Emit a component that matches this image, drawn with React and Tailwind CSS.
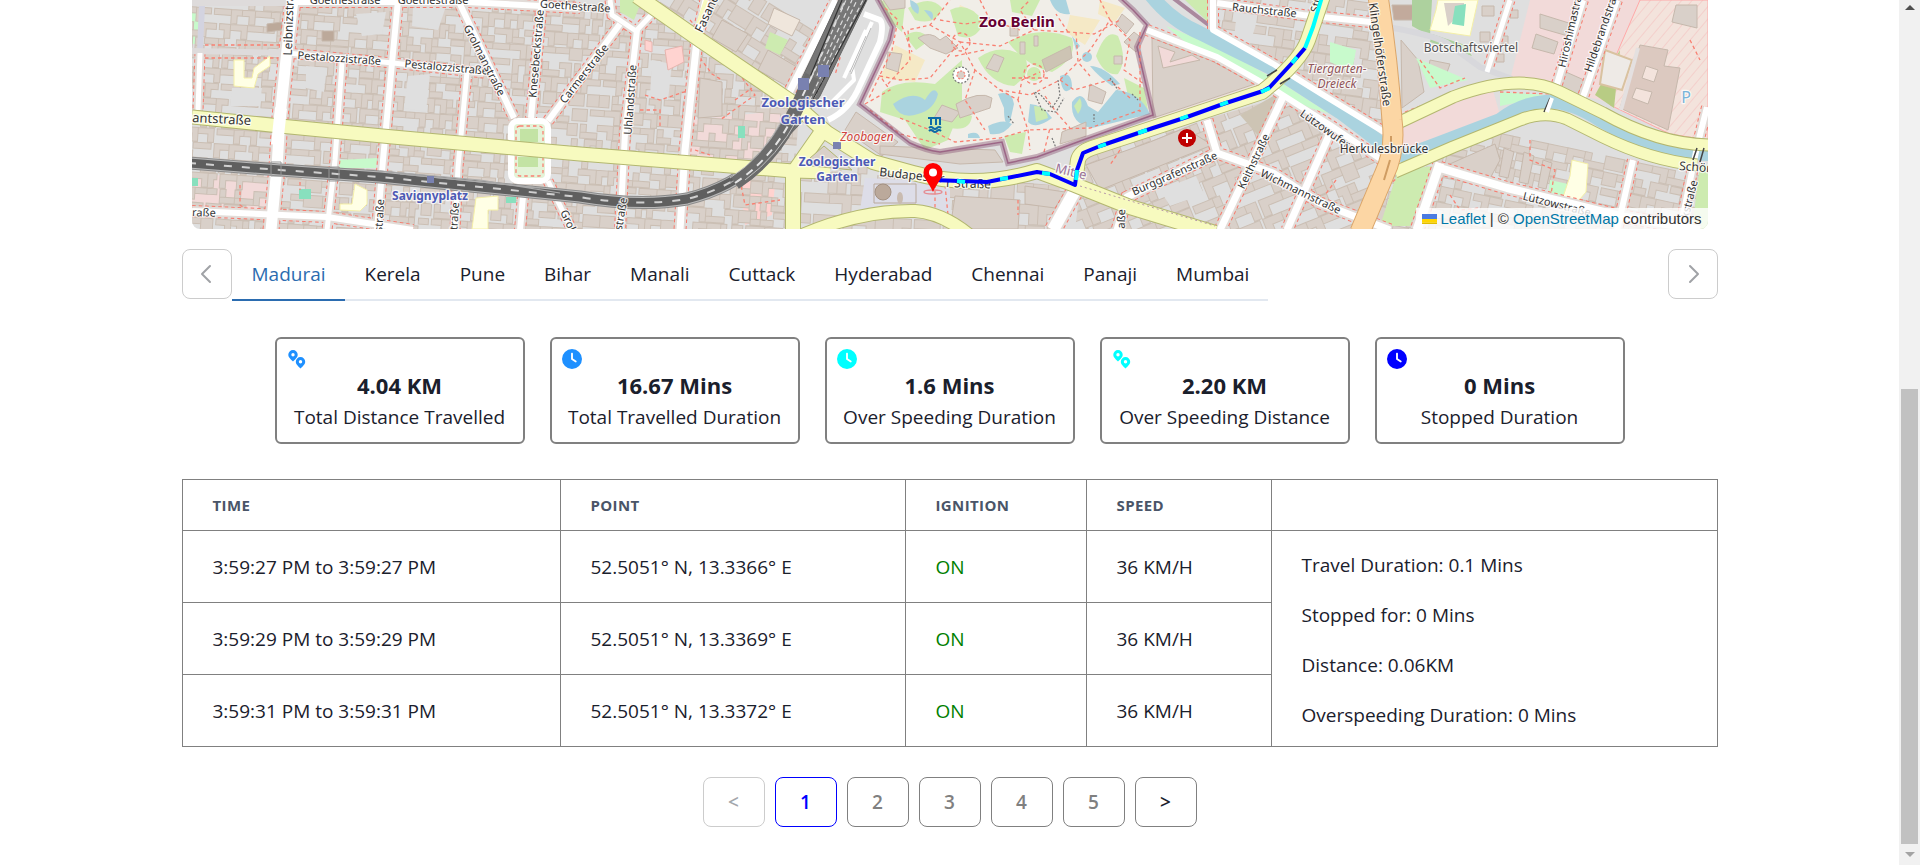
import React, { useState } from "react";
import { FaClock } from "react-icons/fa6";

/* ---------- map drawing ---------- */

function makeRandom(seed) {
  let s = seed;
  return () => {
    s = (s * 16807) % 2147483647;
    return s / 2147483647;
  };
}

// Outlines of houses for one district, laid on a regular grid.
function housePath(width, height, cell, seed) {
  const rnd = makeRandom(seed);
  let d = "";
  for (let y = 0; y < height; y += cell) {
    let x = 0;
    while (x < width) {
      const w = Math.round(cell * (0.6 + rnd() * 0.7));
      const h = cell - 1;
      const t = Math.round(cell * 0.42);
      const k = rnd();
      if (k < 0.28) d += `M${x} ${y}h${w}v${t}h${-(w - t)}v${h - t}h${-t}z`;
      else if (k < 0.5) d += `M${x} ${y}h${w}v${h}h${-t}v${-(h - t)}h${-(w - t)}z`;
      else if (k < 0.62) d += `M${x} ${y}h${w}v${h - 2}h${-w}z`;
      else if (k < 0.8) d += `M${x} ${y + h - t}h${w}v${t}h${-w}zM${x} ${y}h${t}v${h - t}h${-t}z`;
      else d += `M${x} ${y}h${w}v${t}h${-w}z`;
      x += w + (rnd() < 0.25 ? 3 : 0);
    }
  }
  return d;
}

const districts = [
  { id: "west", clip: "192,0 640,0 800,100 790,230 192,230", x: 170, y: -40, w: 680, h: 330, angle: 4, cell: 15, seed: 11 },
  { id: "north", clip: "645,0 832,0 790,95", x: 620, y: -90, w: 260, h: 240, angle: 32, cell: 19, seed: 23 },
  { id: "south", clip: "800,176 870,166 1060,186 1055,230 800,230", x: 790, y: 150, w: 290, h: 120, angle: 3, cell: 21, seed: 37 },
  { id: "mid", clip: "1085,155 1285,96 1390,165 1370,230 1075,230 1080,190", x: 1030, y: 170, w: 380, h: 230, angle: -22, cell: 19, seed: 51 },
  { id: "diplomat", clip: "1216,0 1380,0 1390,130 1215,28", x: 1200, y: -40, w: 230, h: 200, angle: 8, cell: 19, seed: 67 },
  { id: "east", clip: "1400,165 1550,118 1708,170 1708,230 1360,230", x: 1390, y: 110, w: 380, h: 150, angle: 12, cell: 16, seed: 79 },
];

const whiteRoads = [
  ["M293 0L287 50L280 117L277 167L271 230", 11],
  ["M200 53L198 110", 5],
  ["M293 2H467L580 8", 6],
  ["M287 53L393 63L484 73", 5],
  ["M398 0L392 63L383 160L377 230", 6],
  ["M342 63L335 160L327 230", 5],
  ["M467 72L458 167L455 230", 5],
  ["M458 0L514 118", 6],
  ["M542 0L531 118", 6],
  ["M548 121L620 24", 6],
  ["M192 211L327 217L413 230", 6],
  ["M523 196L520 230", 6],
  ["M548 181L572 230", 5],
  ["M610 0L612 15L636 31L656 10", 5],
  ["M637 30L625 133L620 230", 6],
  ["M706 0L697 40L685 150L680 230", 7],
  ["M836 0L787 97", 7],
  ["M1147 30L1217 57L1270 87L1330 125L1382 160", 6],
  ["M1213 0V30L1275 65L1320 93L1384 132", 6],
  ["M1217 3L1303 15L1380 23", 6],
  ["M1283 97L1220 230", 7],
  ["M1207 120L1217 153L1273 173L1320 203L1390 230", 7],
  ["M1217 153L1127 197L1117 230", 7],
  ["M1330 133L1287 230", 7],
  ["M1510 0L1487 72", 5],
  ["M1583 0L1557 84", 6],
  ["M1617 0L1583 97", 6],
  ["M1440 168L1507 188L1620 216L1700 230", 8],
  ["M1440 163L1417 230", 9],
  ["M1633 160L1617 230", 6],
  ["M1707 107L1697 147L1680 230", 6],
  ["M1077 187L1053 230", 12],
];

const yellowRoads = [
  ["M192 117L280 126L393 137L580 154L793 171L830 172", 13],
  ["M637 -4L700 40L793 103L827 133L873 162L913 173Q975 190 1037 171L1075 185L1130 207L1215 233", 14],
  ["M793 232V173L823 130", 14],
  ["M800 236Q860 210 915 211Q945 213 975 240", 12],
  ["M1075 183L1078 160Q1080 152 1092 148L1147 130L1262 92Q1300 62 1308 40L1323 -4", 14],
  ["M1400 122L1453 97Q1520 72 1560 92L1603 113Q1660 145 1712 145", 11],
  ["M1395 172L1453 147L1520 120Q1545 110 1567 119L1603 137Q1650 160 1697 165", 11],
];

const rail = "M188 163L280 170L380 177L580 197Q640 207 687 199Q735 187 765 156Q790 126 808 84L847 -4";
const route = "M933 180L960 181L987 182L1007 178L1037 172L1050 174L1075 185L1077 170L1083 153L1100 146L1153 128L1187 117L1223 104L1263 91L1270 87L1293 62L1305 48";
const routeFast = "M957 181L965 182M1000 179L1008 178M1042 173L1050 174M1076 180L1077 170M1098 147L1106 144M1138 133L1147 130M1180 119L1188 116M1220 105L1228 102M1261 92L1270 88M1292 63L1297 57M1305 48L1313 27L1322 -3";
const zooEdge = "M877 -2L893 27L890 40L860 104L910 143Q925 150 940 152L1002 142L1008 163L1037 157L1083 140L1153 115L1137 47L1147 25L1133 10L1120 -2";

function MapLabel({ x, y, angle = 0, size = 11, fill = "#333", bold, italic, anchor = "middle", children }) {
  return (
    <text
      x={x}
      y={y}
      transform={`rotate(${angle} ${x} ${y})`}
      fontSize={size}
      fill={fill}
      textAnchor={anchor}
      fontWeight={bold ? 700 : 400}
      fontStyle={italic ? "italic" : "normal"}
      stroke="#fff"
      strokeOpacity="0.75"
      strokeWidth="2.5"
      strokeLinejoin="round"
      paintOrder="stroke"
    >
      {children}
    </text>
  );
}

function CityMap() {
  return (
    <svg
      viewBox="192 0 1516 229"
      preserveAspectRatio="xMidYMax slice"
      className="block h-[229px] w-full font-['Noto_Sans',sans-serif]"
      role="img"
      aria-label="Map of the travelled route"
    >
      <defs>
        {districts.map((d) => (
          <clipPath key={d.id} id={`clip-${d.id}`}>
            <polygon points={d.clip} />
          </clipPath>
        ))}
        <clipPath id="clip-zoo">
          <path d={`${zooEdge}Z`} />
        </clipPath>
        <pattern id="hatch" width="8" height="8" patternUnits="userSpaceOnUse" patternTransform="rotate(40)">
          <rect width="8" height="8" fill="#f3e3dc" />
          <path d="M0 0V8" stroke="#f3cfcb" strokeWidth="2" />
        </pattern>
      </defs>

      <rect x="180" y="-10" width="1540" height="250" fill="#dfdfdf" />

      {/* land use */}
      <path d="M192 8H198L200 44H192Z" fill="#c8facc" />
      <path d="M192 175L268 176L265 210H192Z" fill="#f2dad9" />
      <path d="M690 120L790 110L770 165L690 160Z" fill="#f2dad9" />
      <path d="M740 178L775 185L772 215L745 225Z" fill="#ffd3d0" />
      <path d="M1140 30L1212 62L1275 90L1150 128Z" fill="#eadfdb" />
      <path d="M1530 0H1708V140L1600 100L1510 80Z" fill="#f2dad9" />
      <path d="M1380 120L1490 80L1500 115L1400 150Z" fill="#f2dad9" />
      <path d="M1614 60L1640 0H1708V140L1670 134L1610 105Z" fill="url(#hatch)" stroke="#ffa8a8" />

      {/* houses */}
      {districts.map((d) => (
        <g key={d.id} clipPath={`url(#clip-${d.id})`}>
          <path
            transform={`translate(${d.x} ${d.y}) rotate(${d.angle})`}
            d={housePath(d.w, d.h, d.cell, d.seed)}
            fill="#d9d0c9"
            stroke="#cbbfb4"
            strokeWidth="1"
          />
        </g>
      ))}
      <g fill="#d9d0c9" stroke="#c6b8ac">
        <path d="M700 78L722 82L722 116L698 118Z" />
        <path d="M722 20L748 34L736 52L712 38Z" />
        <path d="M768 50L802 70L790 88L758 70Z" />
        <path d="M774 8L800 20L792 36L768 24Z" fill="#efe6dc" />
        <path d="M856 112L898 142L882 156L845 130Z" />
        <path d="M880 146L995 150L1003 162L960 164L880 154Z" />
        <path d="M955 196L1020 200L1018 229H950Z" />
        <path d="M1025 186L1065 192L1055 208L1025 204Z" />
        <path d="M1152 38L1210 60L1255 84L1153 118Z" />
        <path d="M1158 46L1175 52L1170 62L1192 55L1200 60L1163 68Z" fill="#f2dad9" />
        <path d="M1086 165L1150 142L1185 128L1212 145L1100 190Z" />
        <path d="M1275 95L1280 100L1262 140L1240 115Z" fill="#cdc4b4" stroke="none" />
        <path d="M1443 167L1495 144L1500 160L1487 184Z" />
        <path d="M1401 40L1418 60L1424 92L1402 108Z" />
        <path d="M1430 60L1450 64L1445 78L1428 72Z" />
        <path d="M1540 14L1572 24L1568 36L1540 28Z" />
        <path d="M1536 34L1558 42L1554 54L1532 48Z" />
        <path d="M1566 72L1584 80L1576 98L1558 90Z" />
        <path d="M1676 5L1697 5V28L1672 22Z" />
        <path d="M1640 45L1668 50L1664 66L1680 68L1668 130L1620 108Z" fill="#dcc9c0" />
        <path d="M1646 66L1658 70L1654 82L1642 78ZM1636 88L1652 92L1648 104L1632 98Z" fill="#f3e3dc" />
        <path d="M1482 6H1494V16H1482ZM1480 32H1490V42H1480ZM1510 10H1518V18H1510ZM1500 36H1508V44H1500ZM1496 54H1504V62H1496Z" />
        <path d="M1392 5H1414L1412 20H1394Z" fill="#c2aa9c" />
        <path d="M267 24L282 22V30L267 32ZM322 31H334V41H322Z" fill="#bca99a" />
        <path d="M1504 148l10 4l-6 26l-9 -2zM1524 152l10 4l-6 28l-9 -2zM1543 160l9 3l-6 26l-8 -2z" />
      </g>

      {/* courtyards and open blocks */}
      <g fill="#dfdfdf">
        <path d="M232 88H262L260 106H230ZM356 14L386 12L382 34L362 36ZM413 8L446 6L438 30L412 26Z" />
        <path d="M306 66L326 68L324 92L306 88ZM408 76L430 74L426 112L404 108ZM652 60L672 64L668 100L650 96Z" />
        <path d="M1160 190L1196 176L1204 194L1170 206ZM1236 20L1256 24L1250 44L1234 38Z" />
      </g>

      {/* parks, schools and pitches */}
      <g fill="#cdebb0">
        <path d="M620 0H642L634 20L620 12Z" />
        <path d="M770 32L788 40L780 55L765 48Z" />
        <path d="M1398 170L1434 166L1420 200L1410 226H1380Z" />
        <path d="M1185 0H1210L1208 22Z" />
        <path d="M1595 95L1620 50L1614 108Z" fill="#b8cc84" />
        <path d="M1700 165H1708V229H1692Z" />
        <path d="M1412 0H1432L1430 36L1412 26Z" fill="#add19e" />
        <path d="M1432 34L1465 45L1472 56L1430 42Z" fill="#add19e" />
      </g>
      <g fill="#c8facc">
        <path d="M1330 42L1356 50L1352 72L1330 62Z" />
        <path d="M1416 58L1468 80L1430 88Z" />
        <path d="M1500 92L1560 96L1520 102L1500 106Z" />
        <path d="M338 160L377 158L376 168L340 168Z" />
        <path d="M1550 180L1568 184L1564 204L1548 196Z" />
      </g>
      <g fill="#ffffe5" stroke="#f5f0a8">
        <path d="M234 60H244V78H252L254 68L270 56V66L258 74L254 88L234 86Z" />
        <path d="M355 184L367 190V204L360 211L340 210V204H352Z" />
        <path d="M476 198L498 196V210H488V229H472Z" />
        <path d="M1438 0H1478L1470 36L1430 30L1436 10Z" />
        <path d="M1572 160L1588 164L1586 192L1574 206L1562 200L1570 176Z" />
      </g>
      <path d="M1444 3H1464V10L1448 26Z" fill="#d9d0c9" />
      <path d="M1455 6L1466 4L1464 26L1452 24Z" fill="#88e0be" />
      <path d="M1605 50L1632 60L1622 90L1600 84Z" fill="#eeeae6" stroke="#d9c2a0" strokeWidth="2" />
      <path d="M299 189H311V199H299ZM192 178H198V186H192ZM506 197H516V203H506ZM738 126H745V138H738Z" fill="#88e0be" />
      <path d="M665 50L682 46L684 62L668 70ZM645 40L652 42V52L645 50Z" fill="#ffd3d0" stroke="#e6b4ae" />
      <path d="M865 178L950 182V215L900 205L860 210Z" fill="#dddde8" />
      <path d="M874 184H916V203H874Z" fill="none" stroke="#b9a99c" />
      <circle cx="883" cy="192" r="8" fill="#bba99b" stroke="#a39182" />
      <ellipse cx="900" cy="198" rx="3" ry="6" fill="#c9bbb0" />

      {/* zoo */}
      <g clipPath="url(#clip-zoo)">
        <rect x="850" y="-5" width="320" height="180" fill="#f1eee8" />
        <path d="M895 45L925 60L915 82L880 78Z" fill="#f5e9c6" />
        <path d="M1070 15L1100 20L1085 45L1066 32ZM1100 0L1125 8L1115 22L1098 14ZM960 5L975 12L968 26L955 18Z" fill="#f5e9c6" />
        <g fill="#cdebb0">
          <path d="M880 0L905 5L902 32L888 20Z" />
          <path d="M908 8Q930 -6 942 8Q936 26 915 20Z" />
          <path d="M882 92Q900 78 935 84L962 60V105L948 140L925 150L905 120L880 112Z" />
          <path d="M950 10Q968 0 984 22Q976 42 958 36Z" />
          <path d="M978 58Q1000 42 1024 56Q1034 72 1014 86Q990 84 978 58Z" />
          <path d="M1008 42Q1040 24 1072 38Q1078 58 1052 72Q1026 66 1008 42Z" />
          <path d="M1096 56Q1106 28 1118 36Q1128 60 1118 74Q1104 76 1096 56Z" />
          <path d="M1124 78L1144 88L1148 110L1128 96Z" />
          <path d="M940 112Q956 106 972 116Q970 132 950 128Z" />
          <path d="M1004 136L1026 132L1022 154L1010 152Z" />
          <path d="M1010 0H1040L1032 16L1012 12Z" />
          <path d="M905 36Q920 26 930 40L916 50Z" />
          <circle cx="1034" cy="74" r="7" />
        </g>
        <g fill="#aad3df">
          <path d="M893 104Q912 90 925 100Q934 84 938 94Q934 110 918 114Q900 120 893 104Z" />
          <path d="M910 0Q922 4 918 14Q910 10 910 0ZM924 10Q936 10 932 20Z" />
          <path d="M1050 0H1066L1070 14Q1056 16 1050 0Z" />
          <circle cx="1087" cy="57" r="5" />
          <path d="M1090 66Q1104 66 1120 84L1112 86Q1098 76 1090 66Z" />
          <path d="M1072 102Q1082 88 1088 106L1098 112L1116 90Q1140 92 1150 114L1092 128Q1070 124 1072 102Z" />
          <path d="M1060 76Q1072 70 1072 88Q1062 98 1060 76Z" />
          <path d="M1030 104Q1042 104 1052 118Q1036 130 1028 122Z" />
          <path d="M998 94Q1012 90 1014 104L1010 122Q1004 128 1004 108Z" />
          <path d="M988 126Q1004 118 1012 124Q1004 136 990 134Z" />
          <path d="M968 134Q978 130 980 138H968ZM1072 36L1080 46L1076 50Z" />
        </g>
        <path d="M1034 106Q1046 106 1048 118L1036 122Z" fill="#cdebb0" />
        <path d="M1080 98Q1084 106 1078 114L1074 106Z" fill="#cdebb0" />
        <g fill="#d9d0c9" stroke="#c6b8ac">
          <path d="M882 -2H905V8L890 10Z" />
          <path d="M888 52L902 54L898 72L886 68Z" />
          <path d="M918 38Q930 30 940 40L946 36L958 48L946 54L930 48Z" />
          <path d="M942 105L960 112L952 122L934 118Z" />
          <path d="M956 104Q980 90 992 98L990 108L960 118Z" />
          <path d="M994 54L1004 58L998 72L986 68Z" />
          <path d="M1042 60L1070 46L1072 58L1046 72Z" fill="#cdc4b4" />
          <path d="M1090 84L1106 92L1102 104L1088 100Z" />
          <path d="M1114 56H1122V64H1114Z" />
          <path d="M1062 132L1086 122V136L1060 144Z" />
          <path d="M1122 14L1134 24L1126 34L1116 24ZM1134 32L1144 40L1136 52L1124 42Z" />
          <path d="M1010 26L1018 28V36H1010ZM1020 42h5v12h-5zM1034 36h4v10h-4z" />
        </g>
        <g fill="none" stroke="#f98072" strokeWidth="1.3" strokeDasharray="3.5 3">
          <path d="M888 84L910 60L908 30L930 25L950 0M930 25L960 42L975 70L1000 90L1030 95L1060 80L1090 50L1110 20L1100 0" />
          <path d="M865 104L890 90L880 76L900 80L930 78L960 42M900 118L930 130L955 142L1000 138L1028 130L1090 128L1140 110" />
          <path d="M960 42L1000 46L1034 30L1068 32L1094 34L1120 20M975 70L965 100L985 130M1000 90L1018 100L1028 130L1030 150" />
          <path d="M1034 30L1020 10L1030 0M1068 32L1056 14M1060 80L1074 90L1110 80L1130 98M1110 20L1130 40L1124 70L1144 84" />
          <path d="M1076 32L1078 62L1090 76M980 0L990 20L1020 30M1018 100L1022 80L1040 72M1045 96L1056 112L1070 128" />
          <path d="M940 20L965 24L990 20M870 110L900 134L940 144M1044 152L1050 128M1012 78L1050 78M955 56L984 50M902 26L912 52" />
          <circle cx="961" cy="42" r="9" />
          <circle cx="1034" cy="74" r="10" />
        </g>
        <g fill="none" stroke="#777" strokeWidth="1.2" strokeDasharray="2 1.5">
          <circle cx="961" cy="75" r="8" fill="#fff" />
          <circle cx="961" cy="75" r="4" fill="#d9d0c9" stroke="#f98072" />
          <path d="M1058 80L1060 96L1052 108L1040 94L1034 92L1042 110L1056 112L1064 98" />
          <path d="M1110 78L1118 90M1132 94L1138 100M1094 114V122M1008 116L1014 124M1052 138L1056 148" />
        </g>
      </g>
      <path d={zooEdge} fill="none" stroke="#8d5b7b" strokeOpacity="0.45" strokeWidth="6" />
      <path d={zooEdge} fill="none" stroke="#8d4a74" strokeOpacity="0.7" strokeWidth="1.5" />
      <path d="M1173 -2L1210 26L1213 -2" fill="none" stroke="#8d5b7b" strokeOpacity="0.65" strokeWidth="4" />

      {/* footpaths */}
      <g fill="none" stroke="#f98072" strokeWidth="1.3" strokeDasharray="3.5 3">
        <path d="M205 45H285M205 58H285M645 95L660 100L690 90M640 110H660V128M690 20L740 75L755 95L720 120" />
        <path d="M700 58L712 74L722 80M695 150L710 155M740 180L745 205L780 200M735 100L752 88M800 60L840 58L835 75" />
        <path d="M885 8L898 20L892 50L868 100M1100 146L1145 126L1240 98" />
        <path d="M1140 32V112M1120 150L1110 165M935 178V220M945 185L948 215M1018 200V215M1420 60L1440 88L1465 78" />
        <path d="M1405 112L1490 80M1500 92L1550 94M1530 140V160L1555 170L1550 200M1450 195L1460 210L1480 208" />
        <path d="M1620 140L1640 150M1690 40L1700 60M1336 180L1325 195M240 185V205L250 212M300 182V190M1400 175L1384 190" />
      </g>

      {/* white roads with dashed pavements */}
      {whiteRoads.map(([d, w]) => (
        <path key={`p${d}`} d={d} fill="none" stroke="#f7796c" strokeWidth={w + 6} strokeDasharray="3.5 3" />
      ))}
      {whiteRoads.map(([d, w]) => (
        <path key={`g${d}`} d={d} fill="none" stroke="#e2dcd8" strokeWidth={w + 4} />
      ))}

      {/* canal */}
      <path d="M1166 26L1215 46L1280 82L1330 114L1310 108L1240 72L1190 46Z" fill="#c8facc" />
      <path
        d="M1150 -6Q1170 20 1200 33L1275 70L1340 112L1385 146L1405 156L1437 144L1500 120Q1520 104 1545 102Q1570 100 1600 120Q1660 155 1712 154"
        fill="none"
        stroke="#aad3df"
        strokeWidth="14"
      />

      <g fill="none" strokeWidth="6">
        <path d="M202 5L200 50" stroke="#d3d3e0" />
        <path d="M192 3H293M192 51L287 53" stroke="#dedbdb" />
        <path d="M1387 27Q1430 34 1447 43L1480 67L1512 79" stroke="#d8d8dc" />
        <path d="M1621 110L1638 48" stroke="#e4e0e0" strokeWidth="4" />
      </g>
      <g fill="none" stroke="#fff" strokeLinejoin="round">
        {whiteRoads.map(([d, w]) => (
          <path key={`w${d}`} d={d} strokeWidth={w} />
        ))}
        <rect x="511" y="121" width="37" height="60" rx="7" fill="#e4f3d8" strokeWidth="6" />
        <path d="M864 14L880 20Q884 24 880 42L860 85Q850 110 828 120" strokeWidth="6" />
        <path d="M872 22L852 66L854 80L826 108M866 30L844 78" strokeWidth="4" />
      </g>
      <path d="M520 129H538V142H520ZM518 157H538V167H518Z" fill="#c3e3a4" />
      <rect x="516" y="126" width="27" height="50" rx="4" fill="none" stroke="#f98072" strokeWidth="1.3" strokeDasharray="3.5 3" />
      <path d="M871 28L851 74M866 36L850 72" fill="none" stroke="#bbb" />

      {/* railway */}
      <path d={rail} fill="none" stroke="#8a8a8a" strokeWidth="13" />
      <path d={rail} fill="none" stroke="#b9b9b9" strokeWidth="11" />
      <path d={rail} fill="none" stroke="#5f5f5f" strokeWidth="9" />
      <path d="M775 150L788 118L802 78L840 -2H868L820 96L800 124Z" fill="#777" stroke="#666" />
      <g fill="none" stroke="#ddd" strokeWidth="1.2">
        <path d={rail} strokeWidth="2" strokeDasharray="8 10" stroke="#d0d0d0" />
        <path d="M380 171L480 180L560 193M400 174L540 188M730 183Q770 160 792 120" stroke="#aaa" />
        <path d="M792 122L846 0M800 112L852 0M806 108L857 0M814 98L863 0" strokeDasharray="5 3" />
        <path d="M788 130L842 0M803 118L866 0" stroke="#333" />
      </g>
      <path d="M271 162H281V176H271ZM329 167H339V181H329Z" fill="none" stroke="#999" />

      {/* main roads */}
      <g fill="none" strokeLinejoin="round">
        {yellowRoads.map(([d, w]) => (
          <path key={`c${d}`} d={d} stroke="#b3b770" strokeWidth={w + 2} />
        ))}
        {yellowRoads.map(([d, w]) => (
          <path key={`y${d}`} d={d} stroke="#f7fabf" strokeWidth={w} />
        ))}
        <path d="M706 0L698 24" stroke="#f7fabf" strokeWidth="4" />
        <path d="M1378 -4Q1388 60 1392 120Q1396 150 1384 175L1360 232" stroke="#dba66a" strokeWidth="21" />
        <path d="M1378 -4Q1388 60 1392 120Q1396 150 1384 175L1360 232" stroke="#fcd6a4" strokeWidth="19" />
        <path d="M1391 136V148M1390 160L1384 180" stroke="#cf9c62" strokeWidth="2" />
      </g>
      {/* roads and tracks over the yellow road */}
      <g fill="none">
        <path d="M281 108L277 145" stroke="#fff" strokeWidth="12" />
        <path d="M735 183Q770 160 790 122L812 76" stroke="#6b6b6b" strokeWidth="14" />
        <path d="M735 183Q770 160 790 122L812 76" stroke="#e4e4e4" strokeWidth="2" strokeDasharray="8 6" />
        <path d="M745 180Q778 156 798 118M730 178Q762 158 782 120" stroke="#bbb" />
        <path d="M1267 76L1277 70M1280 84L1290 78M1544 112L1550 98M1693 160L1697 148M1700 162L1704 148" stroke="#444" strokeWidth="1.5" />
        <path d="M1547 112L1552 98" stroke="#fff" strokeWidth="4" />
        <path d="M1080 186L1215 226" stroke="#b79aa9" strokeDasharray="2 3" />
      </g>
      <path d="M810 158L824 146L852 170L812 166Z" fill="#d9d0c9" stroke="#b3b770" />

      {/* stations */}
      <path d="M427 176H434V183H427ZM798 78H809V90H798ZM818 65H829V77H818ZM833 142H841V149H833Z" fill="#7981b0" />

      {/* labels */}
      <MapLabel x={345} y={4}>Goethestraße</MapLabel>
      <MapLabel x={433} y={4}>Goethestraße</MapLabel>
      <MapLabel x={575} y={10} angle={4}>Goethestraße</MapLabel>
      <MapLabel x={293} y={18} angle={-88} size={12}>Leibnizstraße</MapLabel>
      <MapLabel x={339} y={62} angle={4}>Pestalozzistraße</MapLabel>
      <MapLabel x={446} y={71} angle={5}>Pestalozzistraße</MapLabel>
      <MapLabel x={481} y={62} angle={63}>Grolmanstraße</MapLabel>
      <MapLabel x={540} y={54} angle={-85}>Knesebeckstraße</MapLabel>
      <MapLabel x={587} y={76} angle={-52}>Carmerstraße</MapLabel>
      <MapLabel x={634} y={100} angle={-86}>Uhlandstraße</MapLabel>
      <MapLabel x={712} y={12} angle={-65} size={12}>Fasanen</MapLabel>
      <MapLabel x={192} y={122} angle={3} size={13} anchor="start">antstraße</MapLabel>
      <MapLabel x={192} y={216} angle={2} anchor="start">raße</MapLabel>
      <MapLabel x={383} y={218} angle={-86}>rstraße</MapLabel>
      <MapLabel x={458} y={219} angle={-86}>straße</MapLabel>
      <MapLabel x={624} y={218} angle={-80}>dstraße</MapLabel>
      <MapLabel x={560} y={212} angle={65} anchor="start">Grolman</MapLabel>
      <MapLabel x={430} y={200} size={12} fill="#4d5ab5" bold>Savignyplatz</MapLabel>
      <MapLabel x={803} y={107} size={13} fill="#4d5ab5" bold>Zoologischer</MapLabel>
      <MapLabel x={803} y={124} size={13} fill="#4d5ab5" bold>Garten</MapLabel>
      <MapLabel x={837} y={166} size={12} fill="#4d5ab5" bold>Zoologischer</MapLabel>
      <MapLabel x={837} y={181} size={12} fill="#4d5ab5" bold>Garten</MapLabel>
      <MapLabel x={867} y={141} size={12} fill="#d0443c" italic>Zoobogen</MapLabel>
      <MapLabel x={1017} y={27} size={15} fill="#660033" bold>Zoo Berlin</MapLabel>
      <MapLabel x={879} y={176} angle={6} size={12} anchor="start">Budapester</MapLabel>
      <MapLabel x={946} y={187} angle={2} size={12} anchor="start">r Straße</MapLabel>
      <MapLabel x={1070} y={176} angle={14} size={13} fill="#9b7399">Mitte</MapLabel>
      <MapLabel x={1264} y={14} angle={6}>Rauchstraße</MapLabel>
      <MapLabel x={1318} y={13} angle={-78} anchor="start">Stüler</MapLabel>
      <MapLabel x={1337} y={73} size={12} fill="#91555a" italic>Tiergarten-</MapLabel>
      <MapLabel x={1337} y={88} size={12} fill="#91555a" italic>Dreieck</MapLabel>
      <MapLabel x={1323} y={132} angle={35}>Lützowufer</MapLabel>
      <MapLabel x={1176} y={177} angle={-24}>Burggrafenstraße</MapLabel>
      <MapLabel x={1257} y={163} angle={-64}>Keithstraße</MapLabel>
      <MapLabel x={1299} y={195} angle={26}>Wichmannstraße</MapLabel>
      <MapLabel x={1125} y={219} angle={-88}>aße</MapLabel>
      <MapLabel x={1376} y={55} angle={82} size={12}>Klingelhöferstraße</MapLabel>
      <MapLabel x={1384} y={153} size={12}>Herkulesbrücke</MapLabel>
      <MapLabel x={1471} y={52} size={12} fill="#555">Botschaftsviertel</MapLabel>
      <MapLabel x={1575} y={26} angle={-77}>Hiroshimastraße</MapLabel>
      <MapLabel x={1606} y={30} angle={-71}>Hildebrandstraße</MapLabel>
      <MapLabel x={1556} y={208} angle={14}>Lützowstraße</MapLabel>
      <MapLabel x={1693} y={200} angle={-76}>kstraße</MapLabel>
      <MapLabel x={1679} y={170} angle={4} size={12} anchor="start">Schöneb</MapLabel>
      <MapLabel x={1686} y={103} size={16} fill="#79b4da">P</MapLabel>

      {/* aquarium and hospital */}
      <path d="M928 118H941M931 118V125M936 118V125M940 118V125M929 128q2 -2 4 0t4 0t4 0M929 131q2 -2 4 0t4 0t4 0" fill="none" stroke="#0d6aa8" strokeWidth="2" />
      <circle cx="1187" cy="138" r="9" fill="#bf0000" />
      <path d="M1187 133V143M1182 138H1192" stroke="#fff" strokeWidth="2" />

      {/* travelled route */}
      <path d={route} fill="none" stroke="#0000ff" strokeWidth="4" strokeLinejoin="round" />
      <path d={routeFast} fill="none" stroke="#00ffff" strokeWidth="4" />
      <ellipse cx="933" cy="192" rx="9" ry="2" fill="none" stroke="#e58a90" strokeWidth="1.3" />
      <path
        d="M933 163a9.500 9.500 0 0 0-9.500 9.500c0 6 6 11 9.500 19.500c3.500-8.500 9.500-13.500 9.500-19.500a9.500 9.500 0 0 0-9.500-9.500z"
        fill="#ff0000"
      />
      <circle cx="933" cy="172.500" r="4" fill="#fff" />
    </svg>
  );
}

/* ---------- page parts ---------- */

function PinsIcon({ className }) {
  const pin = "M5 0a4.700 4.700 0 0 0-4.700 4.700C.3 7.600 3 9.200 5 11.500C7 9.200 9.700 7.600 9.700 4.700A4.700 4.700 0 0 0 5 0zm0 3a1.700 1.700 0 1 1 0 3.400a1.700 1.700 0 0 1 0-3.400z";
  return (
    <svg viewBox="0 0 20 20" className={className} fill="currentColor" fillRule="evenodd" aria-hidden="true">
      <path transform="translate(1 1)" d={pin} />
      <path transform="translate(8.500 8)" d={pin} />
    </svg>
  );
}

function Chevron({ d }) {
  return (
    <svg viewBox="0 0 20 20" className="size-5" fill="none" stroke="currentColor" strokeWidth="2" strokeLinecap="round" strokeLinejoin="round" aria-hidden="true">
      <path d={d} />
    </svg>
  );
}

const cities = ["Madurai", "Kerela", "Pune", "Bihar", "Manali", "Cuttack", "Hyderabad", "Chennai", "Panaji", "Mumbai"];

const stats = [
  { value: "4.04 KM", label: "Total Distance Travelled", Icon: PinsIcon, color: "text-[#1e90ff]" },
  { value: "16.67 Mins", label: "Total Travelled Duration", Icon: FaClock, color: "text-[#1e90ff]" },
  { value: "1.6 Mins", label: "Over Speeding Duration", Icon: FaClock, color: "text-[#00ffff]" },
  { value: "2.20 KM", label: "Over Speeding Distance", Icon: PinsIcon, color: "text-[#00ffff]" },
  { value: "0 Mins", label: "Stopped Duration", Icon: FaClock, color: "text-[#0000ff]" },
];

const rows = [
  { time: "3:59:27 PM to 3:59:27 PM", point: "52.5051° N, 13.3366° E" },
  { time: "3:59:29 PM to 3:59:29 PM", point: "52.5051° N, 13.3369° E" },
  { time: "3:59:31 PM to 3:59:31 PM", point: "52.5051° N, 13.3372° E" },
];

const summary = ["Travel Duration: 0.1 Mins", "Stopped for: 0 Mins", "Distance: 0.06KM", "Overspeeding Duration: 0 Mins"];

const th = "border border-[#808080] px-[30px] py-[15px] text-left text-[15px] leading-5 font-bold tracking-wide text-[#4a5568] uppercase";
const td = "border border-[#808080] px-[30px] py-5";
const arrowButton = "flex size-[50px] shrink-0 items-center justify-center rounded-lg border border-[#cccccc] text-[#a0a2a6]";
const pageButton = "h-[50px] w-[62px] rounded-lg border font-semibold";

export default function App() {
  const [city, setCity] = useState("Madurai");
  const [page, setPage] = useState(1);

  return (
    <div className="flex min-h-screen bg-white font-['Open_Sans','Noto_Sans',sans-serif] text-[19px] leading-[30px] text-[#1a202c]">
      <main className="min-w-0 flex-1 px-6 pb-6">
        <div className="mx-auto max-w-[1536px]">
          <section className="relative mx-[10px] overflow-hidden rounded-b-lg">
            <CityMap />
            <div className="absolute right-0 bottom-0 flex items-center gap-1 bg-white/80 px-[6px] font-['Liberation_Sans',Arial,sans-serif] text-[15px] leading-[21px] text-[#333]">
              <svg viewBox="0 0 12 8" className="h-[10px] w-[15px]" aria-hidden="true">
                <path fill="#4C7BE1" d="M0 0h12v4H0z" />
                <path fill="#FFD500" d="M0 4h12v3H0z" />
                <path fill="#E0BC00" d="M0 7h12v1H0z" />
              </svg>
              <p>
                <a href="#leaflet" className="text-[#0078a8]">Leaflet</a> | ©{" "}
                <a href="#openstreetmap" className="text-[#0078a8]">OpenStreetMap</a> contributors
              </p>
            </div>
          </section>

          <nav className="mt-5 flex items-start" aria-label="Cities">
            <button type="button" className={arrowButton} aria-label="Previous cities">
              <Chevron d="M13 2L5 10L13 18" />
            </button>
            <div role="tablist" className="flex border-b-2 border-[#e2e8f0]">
              {cities.map((c) => (
                <button
                  key={c}
                  type="button"
                  role="tab"
                  aria-selected={c === city}
                  onClick={() => setCity(c)}
                  className={`-mb-[2px] border-b-2 py-[10px] pr-[19px] pl-5 ${c === city ? "border-[#2b6cb0] text-[#2b6cb0]" : "border-transparent"}`}
                >
                  {c}
                </button>
              ))}
            </div>
            <button type="button" className={`${arrowButton} ml-auto`} aria-label="Next cities">
              <Chevron d="M7 2L15 10L7 18" />
            </button>
          </nav>

          <section className="mt-9 flex flex-wrap justify-center gap-[25px]">
            {stats.map(({ value, label, Icon, color }) => (
              <article key={label} className="flex w-[250px] flex-col rounded-md border-2 border-[#808080] p-[10px] pb-[9px] text-center">
                <Icon className={`size-5 ${color}`} />
                <p className="text-[22px] leading-8 font-bold">{value}</p>
                <p className="leading-8 whitespace-nowrap">{label}</p>
              </article>
            ))}
          </section>

          <table className="mt-[35px] w-full table-fixed border-collapse">
            <thead>
              <tr>
                <th scope="col" className={`${th} w-[378px]`}>Time</th>
                <th scope="col" className={`${th} w-[345px]`}>Point</th>
                <th scope="col" className={`${th} w-[181px]`}>Ignition</th>
                <th scope="col" className={`${th} w-[185px]`}>Speed</th>
                <td className={th}></td>
              </tr>
            </thead>
            <tbody>
              {rows.map((r, i) => (
                <tr key={r.time} className="h-[72px]">
                  <td className={td}>{r.time}</td>
                  <td className={td}>{r.point}</td>
                  <td className={`${td} text-[#008000]`}>ON</td>
                  <td className={td}>36 KM/H</td>
                  {i === 0 && (
                    <td rowSpan={3} className="border border-[#808080] px-[30px] align-top">
                      <ul className="flex flex-col gap-5 pt-[19px]">
                        {summary.map((s) => (
                          <li key={s}>{s}</li>
                        ))}
                      </ul>
                    </td>
                  )}
                </tr>
              ))}
            </tbody>
          </table>

          <nav className="mt-[30px] flex justify-center gap-[10px]" aria-label="Pages">
            <button type="button" disabled className={`${pageButton} border-[#cccccc] text-[#a3a6ab]`}>
              &lt;
            </button>
            {[1, 2, 3, 4, 5].map((n) => (
              <button
                key={n}
                type="button"
                onClick={() => setPage(n)}
                className={`${pageButton} ${n === page ? "border-[#0000ff] text-[#0000ff]" : "border-[#808080] text-[#808080]"}`}
              >
                {n}
              </button>
            ))}
            <button type="button" className={`${pageButton} border-[#808080]`}>
              &gt;
            </button>
          </nav>
        </div>
      </main>

      <aside className="sticky top-0 flex h-screen w-[21px] shrink-0 flex-col items-center bg-[#f1f1f1] py-[5px]" aria-hidden="true">
        <svg viewBox="0 0 10 5" className="h-[5px] w-[10px]">
          <path d="M5 0L10 5H0Z" fill="#505050" />
        </svg>
        <div className="flex min-h-0 w-full flex-1 flex-col px-[2px] pt-3 pb-2">
          <div className="flex-[367]"></div>
          <div className="flex-[454] bg-[#c1c1c1]"></div>
        </div>
        <svg viewBox="0 0 10 5" className="mb-[3px] h-[5px] w-[10px]">
          <path d="M0 0H10L5 5Z" fill="#a3a3a3" />
        </svg>
      </aside>
    </div>
  );
}
